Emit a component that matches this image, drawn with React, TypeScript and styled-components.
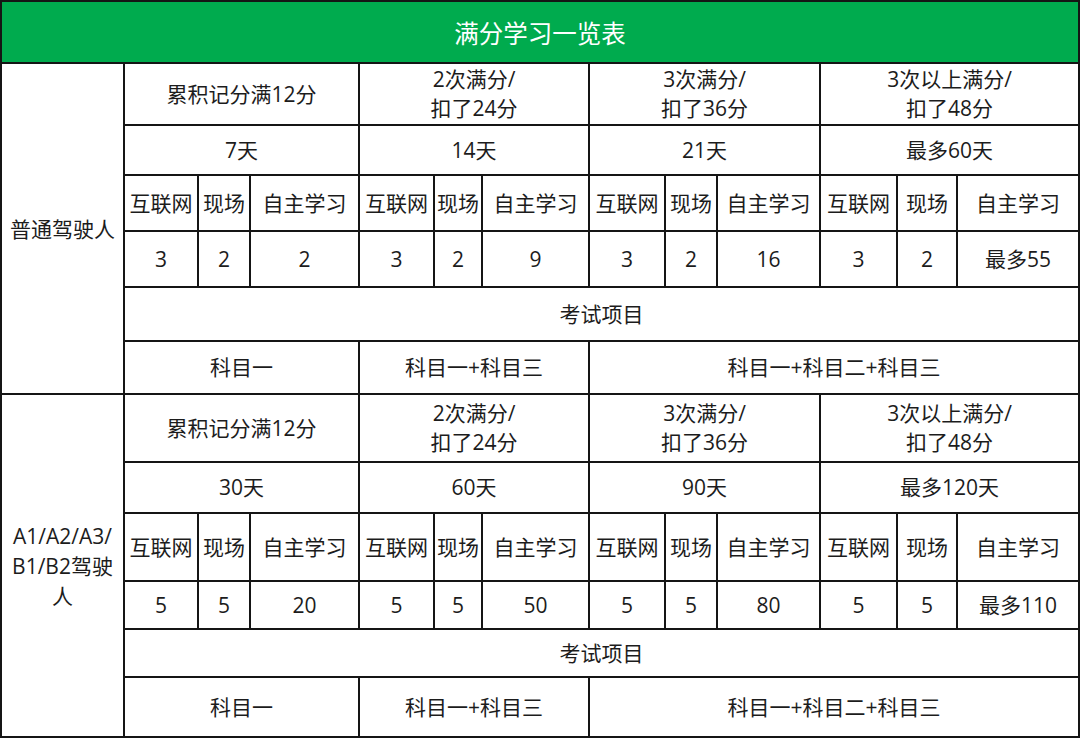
import React from "react";
import styled, { createGlobalStyle } from "styled-components";

const Global = createGlobalStyle`
  html, body { margin: 0; padding: 0; background: #ffffff; }
  body { font-family: "Open Sans", "Noto Sans CJK SC", sans-serif; }
`;

const Sheet = styled.div`
  width: 1080px;
  height: 738px;
  box-sizing: border-box;
  padding: 2px;
  background: #151515;
  display: grid;
  grid-template-columns: 121px 72px 50px 107px 73px 46px 105px 74px 50px 101px 75px 58px 120px;
  grid-template-rows: 60px 60px 48px 54px 54px 52px 51px 66px 49px 66px 46px 46px 58px;
  gap: 2px;
  font-family: "Open Sans", "Noto Sans CJK SC", sans-serif;
  color: #1c1c1c;
`;

const Title = styled.div`
  grid-column: 1 / -1;
  background: #00ab4e;
  color: #ffffff;
  font-size: 24.5px;
  display: flex;
  align-items: center;
  justify-content: center;
  letter-spacing: 0;
`;

const Cell = styled.div<{ $span?: number }>`
  grid-column: span ${(p) => p.$span ?? 1};
  background: #ffffff;
  display: flex;
  align-items: center;
  justify-content: center;
  text-align: center;
  font-size: 21px;
  line-height: 29px;
  white-space: nowrap;
`;

const GroupLabel = styled(Cell)`
  grid-row: span 6;
  line-height: 30px;
`;

type Group = {
  label: React.ReactNode;
  heads: React.ReactNode[];
  days: string[];
  values: string[][];
};

const heads: React.ReactNode[] = [
  "累积记分满12分",
  <>2次满分/<br />扣了24分</>,
  <>3次满分/<br />扣了36分</>,
  <>3次以上满分/<br />扣了48分</>,
];

const groups: Group[] = [
  {
    label: "普通驾驶人",
    heads,
    days: ["7天", "14天", "21天", "最多60天"],
    values: [
      ["3", "2", "2"],
      ["3", "2", "9"],
      ["3", "2", "16"],
      ["3", "2", "最多55"],
    ],
  },
  {
    label: <>A1/A2/A3/<br />B1/B2驾驶<br />人</>,
    heads,
    days: ["30天", "60天", "90天", "最多120天"],
    values: [
      ["5", "5", "20"],
      ["5", "5", "50"],
      ["5", "5", "80"],
      ["5", "5", "最多110"],
    ],
  },
];

const subHeads = ["互联网", "现场", "自主学习"];

function GroupRows({ g }: { g: Group }) {
  return (
    <>
      <GroupLabel>{g.label}</GroupLabel>
      {g.heads.map((h, i) => (
        <Cell key={"h" + i} $span={3}>{h}</Cell>
      ))}
      {g.days.map((d, i) => (
        <Cell key={"d" + i} $span={3}>{d}</Cell>
      ))}
      {g.values.map((_, i) =>
        subHeads.map((s, j) => <Cell key={"s" + i + j}>{s}</Cell>)
      )}
      {g.values.map((vs, i) =>
        vs.map((v, j) => <Cell key={"v" + i + j}>{v}</Cell>)
      )}
      <Cell $span={12}>考试项目</Cell>
      <Cell $span={3}>科目一</Cell>
      <Cell $span={3}>科目一+科目三</Cell>
      <Cell $span={6}>科目一+科目二+科目三</Cell>
    </>
  );
}

export default function App() {
  return (
    <>
      <Global />
      <Sheet>
        <Title>满分学习一览表</Title>
        {groups.map((g, i) => (
          <GroupRows key={i} g={g} />
        ))}
      </Sheet>
    </>
  );
}
